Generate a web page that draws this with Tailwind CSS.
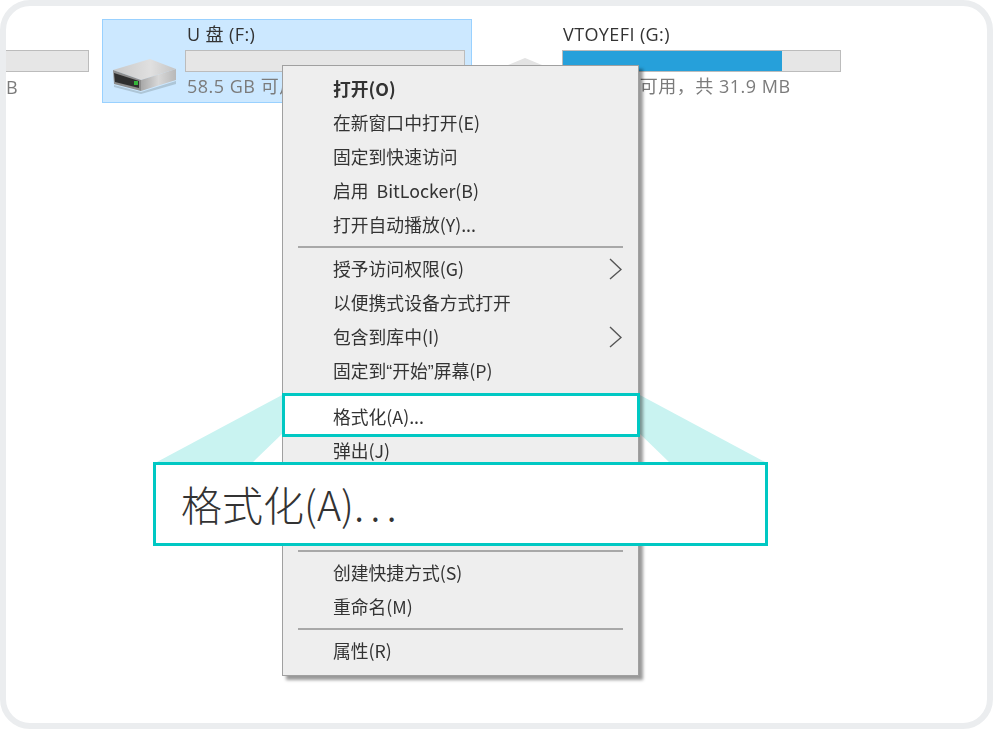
<!DOCTYPE html>
<html lang="zh-CN">
<head>
<meta charset="utf-8">
<title>格式化</title>
<script src="https://cdn.jsdelivr.net/npm/@tailwindcss/browser@4"></script>
</head>
<body class="bg-white">
<div class="relative w-[993px] h-[729px] overflow-hidden bg-white font-['Open_Sans','Noto_Sans_CJK_SC',sans-serif]">
  <!-- frame -->
  <div class="h-full w-full border-[6px] border-[#ebedef] rounded-[30px] overflow-hidden">
    <!-- explorer drives row -->
    <div class="flex items-start pt-[13px] text-[18px] leading-[22px] blur-[0.5px]">
      <div class="w-[83px] pt-[31px] shrink-0">
        <div class="h-[22px] bg-[#e6e6e6] border border-l-0 border-[#bcbcbc]"></div>
        <div class="mt-[4px] text-[#7b7b7b]">B</div>
      </div>
      <div class="ml-[13px] w-[370px] h-[84px] shrink-0 bg-[#cce8ff] border border-[#99d1ff] flex">
        <svg class="w-[82px] h-[82px] shrink-0" viewBox="102 20 82 82">
          <defs>
            <linearGradient id="g1" x1="0" y1="0" x2="1" y2="0"><stop offset="0" stop-color="#c8c8c8"/><stop offset="0.6" stop-color="#e0e0e0"/><stop offset="1" stop-color="#c4c4c4"/></linearGradient>
            <linearGradient id="g2" x1="0" y1="0" x2="1" y2="0"><stop offset="0" stop-color="#a8a8a8"/><stop offset="0.5" stop-color="#d8d8d8"/><stop offset="1" stop-color="#b8b8b8"/></linearGradient>
          </defs>
          <path d="M113 85 L140 92 L175 81 L175 84 L140 94 L113 87 Z" fill="#8fa3b0" opacity="0.5"/>
          <path d="M112 70 L149 59 L175 69 L140 80 Z" fill="url(#g1)"/>
          <path d="M140 80 L175 69 L175 80 L140 91 Z" fill="url(#g2)"/>
          <path d="M112 70 L140 80 L140 91 L113 84 Z" fill="#8d8d8d"/>
          <path d="M113 73 L138 81 L138 88 L114 82 Z" fill="#2f2f2f"/>
          <rect x="133" y="81" width="4" height="4" fill="#35b53a"/>
        </svg>
        <div class="text-[#333]">
          <div class="leading-[22px] pt-[3px] pl-[2px] tracking-[0.4px]">U 盘 (F:)</div>
          <div class="w-[280px] h-[22px] mt-[5px] bg-[#e6e6e6] border border-[#bcbcbc]"></div>
          <div class="mt-[3px] pl-[2px] text-[#7b7b7b] tracking-[0.5px]">58.5 GB 可用</div>
        </div>
      </div>
      <div class="ml-[90px] w-[279px] shrink-0">
        <div class="pl-[1px] pt-[4px] text-[#333] tracking-[0.4px]">VTOYEFI (G:)</div>
        <div class="h-[22px] mt-[5px] bg-[#e6e6e6] border border-[#bcbcbc]">
          <div class="h-full w-[219px] bg-[#26a0da]"></div>
        </div>
        <div class="mt-[3px] pl-[1px] text-[#7b7b7b] whitespace-nowrap tracking-[0.5px]">6.32 MB 可用，共 31.9 MB</div>
      </div>
    </div>
  </div>

  <!-- peek of the icon behind the menu -->
  <svg class="absolute left-[500px] top-[50px] w-[50px] h-[16px]" viewBox="0 0 50 16"><path d="M8 15 L25 8 L42 15 Z" fill="#e3e3e3"/></svg>

  <!-- zoom guide bands -->
  <svg class="absolute left-0 top-0 w-[993px] h-[729px]" viewBox="0 0 993 729">
    <path d="M284 394 L155 463 L252 463 L284 432 Z" fill="#c9f3f1"/>
    <path d="M638 394 L767 463 L670 463 L638 432 Z" fill="#c9f3f1"/>
  </svg>

  <!-- context menu -->
  <div class="absolute left-[282px] top-[65px] w-[357px] h-[611px] bg-[#eeeeee] border border-[#a0a0a0] shadow-[4px_4px_3px_rgba(0,0,0,0.4)] pt-[6px] text-[17.8px] text-[#333] font-['Noto_Sans_CJK_SC',sans-serif]">
    <div class="blur-[0.5px]">
      <div class="h-[34px] pl-[50px] pb-[2px] flex items-center font-bold">打开(O)</div>
      <div class="h-[34px] pl-[50px] pb-[2px] flex items-center">在新窗口中打开(E)</div>
      <div class="h-[34px] pl-[50px] pb-[2px] flex items-center">固定到快速访问</div>
      <div class="h-[34px] pl-[50px] pb-[2px] flex items-center">启用&nbsp; BitLocker(B)</div>
      <div class="h-[34px] pl-[50px] pb-[2px] flex items-center">打开自动播放(Y)...</div>
      <div class="h-[2px] my-[4px] mx-[15px] bg-[#a8a8a8]"></div>
      <div class="h-[34px] pl-[50px] pr-[16px] flex items-center justify-between">
        <span class="-mt-[2px]">授予访问权限(G)</span>
        <svg class="w-[13px] h-[22px]" viewBox="0 0 13 22" fill="none" stroke="#555" stroke-width="1.4"><path d="M1 1 L12 11.5 L1 21"/></svg>
      </div>
      <div class="h-[34px] pl-[50px] pb-[2px] flex items-center">以便携式设备方式打开</div>
      <div class="h-[34px] pl-[50px] pr-[16px] flex items-center justify-between">
        <span class="-mt-[2px]">包含到库中(I)</span>
        <svg class="w-[13px] h-[22px]" viewBox="0 0 13 22" fill="none" stroke="#555" stroke-width="1.4"><path d="M1 1 L12 11.5 L1 21"/></svg>
      </div>
      <div class="h-[34px] pl-[50px] flex items-center"><span>固定到<span class="font-['Liberation_Sans']">“</span>开始<span class="font-['Liberation_Sans']">”</span>屏幕(P)</span></div>
      <div class="h-[46px]"></div>
      <div class="h-[34px] pl-[50px] pb-[2px] flex items-center">弹出(J)</div>
      <div class="h-[82px]"></div>
      <div class="h-[2px] mx-[15px] bg-[#a8a8a8]"></div>
      <div class="h-[4px]"></div>
      <div class="h-[34px] pl-[50px] pb-[2px] flex items-center">创建快捷方式(S)</div>
      <div class="h-[34px] pl-[50px] pb-[2px] flex items-center">重命名(M)</div>
      <div class="h-[2px] my-[4px] mx-[15px] bg-[#a8a8a8]"></div>
      <div class="h-[34px] pl-[50px] pb-[2px] flex items-center">属性(R)</div>
    </div>
  </div>

  <!-- highlight on the menu item -->
  <div class="absolute left-[282px] top-[393px] w-[358px] h-[44px] bg-white border-[3px] border-[#00c8c3] pl-[48px] pt-[2px] flex items-center text-[17.8px] text-[#333] font-['Noto_Sans_CJK_SC',sans-serif]">
    <span class="blur-[0.5px]">格式化(A)...</span>
  </div>

  <!-- magnified callout -->
  <div class="absolute left-[153px] top-[462px] w-[615px] h-[84px] bg-white border-[3px] border-[#00c8c3] pl-[25px] flex items-center text-[41px] font-light text-[#333] font-['Noto_Sans_CJK_SC',sans-serif]">
    <span>格式化(A)<span class="tracking-[6px]">...</span></span>
  </div>
</div>
</body>
</html>
